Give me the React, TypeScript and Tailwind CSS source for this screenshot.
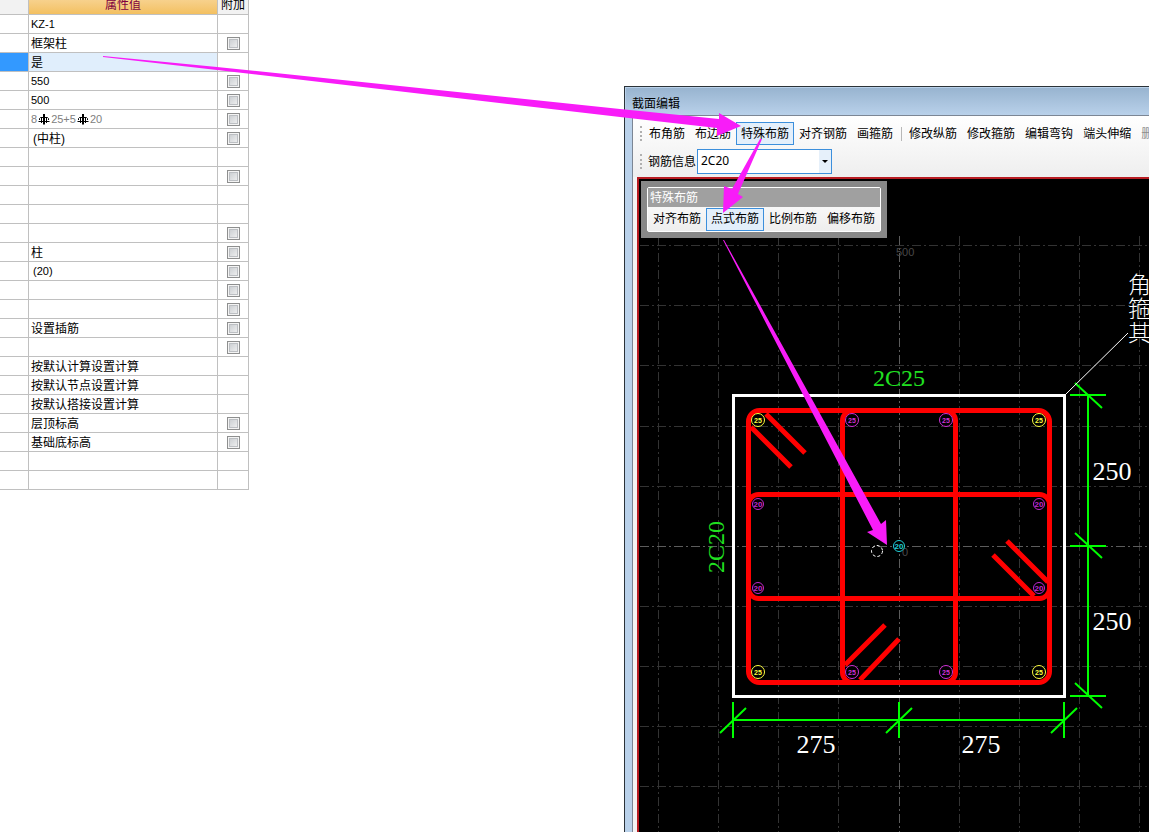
import React from 'react';

interface PropertyRow {
  value?: React.ReactNode;
  extra?: boolean;
  selected?: boolean;
  latin?: boolean;
}

const RebarSign = () => (
  <svg viewBox="0 0 12 12" className="mx-px size-3 shrink-0" fill="none" stroke="black">
    <path d="M6 1v10.5" strokeWidth="2" />
    <path d="M1.5 7V5.5l1-1h7l1 1V7M0.5 8.5h11M3.5 4v6M8.5 4v6" />
  </svg>
);

const rows: PropertyRow[] = [
  { value: 'KZ-1', latin: true },
  { value: '框架柱', extra: true },
  { value: '是', selected: true },
  { value: '550', extra: true, latin: true },
  { value: '500', extra: true, latin: true },
  {
    value: (
      <span className="flex items-center text-[#808080]">
        8<RebarSign />25+5<RebarSign />20
      </span>
    ),
    extra: true,
    latin: true,
  },
  { value: <span className="pl-0.5">(中柱)</span>, extra: true },
  {},
  { extra: true },
  {},
  {},
  { extra: true },
  { value: '柱', extra: true },
  { value: <span className="pl-0.5">(20)</span>, extra: true, latin: true },
  { extra: true },
  { extra: true },
  { value: '设置插筋', extra: true },
  { extra: true },
  { value: '按默认计算设置计算' },
  { value: '按默认节点设置计算' },
  { value: '按默认搭接设置计算' },
  { value: '层顶标高', extra: true },
  { value: '基础底标高', extra: true },
  {},
  {},
];

const PropertyTable = () => (
  <table className="-mt-1 w-[249px] shrink-0 table-fixed border-separate border-spacing-0 self-start text-xs leading-4 text-black">
    <colgroup>
      <col className="w-[29px]" />
      <col className="w-[189px]" />
      <col className="w-[31px]" />
    </colgroup>
    <thead>
      <tr className="h-[19px]">
        <th className="border-r border-b border-[#c0c0c0] bg-[#f2f2f2] p-0" />
        <th className="border-r border-b border-[#c0c0c0] bg-linear-to-b from-[#f8d698] to-[#f3c060] p-0 font-normal text-[#800040]">
          属性值
        </th>
        <th className="border-r border-b border-[#c0c0c0] bg-[#f2f2f2] p-0 font-normal whitespace-nowrap">附加</th>
      </tr>
    </thead>
    <tbody>
      {rows.map((row, i) => (
        <tr key={i} className="h-[19px]">
          <td className={`border-r border-b border-[#c0c0c0] p-0 ${row.selected ? 'bg-[#3399ff]' : ''}`} />
          <td
            className={`border-r border-b border-[#c0c0c0] pr-0 pb-0 pl-0.5 whitespace-nowrap ${
              row.selected ? 'bg-[#e0eefc]' : ''
            } ${row.latin ? 'pt-0 text-[11px]' : 'pt-0.5'}`}
          >
            {row.value}
          </td>
          <td className="border-r border-b border-[#c0c0c0] p-0">
            {row.extra && (
              <input
                type="checkbox"
                aria-label={`附加 ${i + 1}`}
                className="mx-auto block size-[13px] appearance-none border border-[#8e8f8f] bg-linear-to-br from-[#c4c8cc] to-[#f6f6f6] shadow-[inset_0_0_0_1px_#f4f4f4,inset_0_0_0_2px_#bcbfc3]"
              />
            )}
          </td>
        </tr>
      ))}
    </tbody>
  </table>
);

const ToolButton = ({ label, active, muted }: { label: string; active?: boolean; muted?: boolean }) => (
  <button
    type="button"
    className={`h-[23px] shrink-0 border px-1 whitespace-nowrap ${
      active ? 'border-[#3c8fdc] bg-[#e3effb]' : 'border-transparent'
    } ${muted ? 'text-[#8d8d8d]' : 'text-black'}`}
  >
    {label}
  </button>
);

const Grip = () => <span className="mr-0.5 h-[15px] w-0.5 shrink-0 border-l-2 border-dotted border-[#b0b0b0]" />;

const Toolbars = () => (
  <div className="bg-linear-to-b from-white to-[#eeeeee] pl-[7px]">
    <div className="flex h-[31px] items-center overflow-hidden pt-1">
      <Grip />
      <ToolButton label="布角筋" />
      <ToolButton label="布边筋" />
      <ToolButton label="特殊布筋" active />
      <ToolButton label="对齐钢筋" />
      <ToolButton label="画箍筋" />
      <span className="mr-0.5 ml-[3px] h-3.5 w-px shrink-0 bg-[#b8b8b8]" />
      <ToolButton label="修改纵筋" />
      <ToolButton label="修改箍筋" />
      <ToolButton label="编辑弯钩" />
      <ToolButton label="端头伸缩" />
      <ToolButton label="删" muted />
    </div>
    <div className="flex h-[30px] items-center pb-px">
      <Grip />
      <label htmlFor="rebar" className="ml-1 w-[49px] whitespace-nowrap">
        钢筋信息
      </label>
      <div className="relative">
        <select
          id="rebar"
          defaultValue="2C20"
          className="block h-[25px] w-[135px] appearance-none border border-[#3c8fdc] bg-white px-[3px] pb-0.5 font-['Noto_Sans'] text-xs text-black"
        >
          <option>2C20</option>
          <option>2C25</option>
        </select>
        <span className="pointer-events-none absolute inset-y-px right-px flex w-3 items-center justify-center bg-[#e6f0fa]">
          <svg viewBox="0 0 6 3" className="h-[3px] w-1.5">
            <path d="M0 0h6L3 3z" />
          </svg>
        </span>
      </div>
    </div>
  </div>
);

const SpecialPanel = () => (
  <div className="absolute top-0.5 left-0.5 bg-[#888888] p-1.5">
    <div className="rounded-xs border border-white bg-linear-to-b from-white to-[#eeeeee]">
      <h2 className="h-[19px] bg-[#a0a0a0] pl-0.5 leading-[21px] text-white">特殊布筋</h2>
      <div className="flex h-6 items-center">
        <ToolButton label="对齐布筋" />
        <ToolButton label="点式布筋" active />
        <ToolButton label="比例布筋" />
        <ToolButton label="偏移布筋" />
      </div>
    </div>
  </div>
);

const gridX = [658, 718, 778, 838, 959, 1019, 1079, 1139, 1199, 1259, 1319, 1379];
const gridY = [245, 305, 365, 426, 486, 606, 666, 726, 786, 846, 906, 966];

const bars = [
  { x: 758, y: 420, d: 25, color: '#ffff40' },
  { x: 1039, y: 420, d: 25, color: '#ffff40' },
  { x: 758, y: 672, d: 25, color: '#ffff40' },
  { x: 1039, y: 672, d: 25, color: '#ffff40' },
  { x: 852, y: 420, d: 25, color: '#d030d8' },
  { x: 946, y: 420, d: 25, color: '#d030d8' },
  { x: 852, y: 672, d: 25, color: '#d030d8' },
  { x: 946, y: 672, d: 25, color: '#d030d8' },
  { x: 758, y: 504, d: 20, color: '#c028d0' },
  { x: 1039, y: 504, d: 20, color: '#c028d0' },
  { x: 758, y: 588, d: 20, color: '#c028d0' },
  { x: 1039, y: 588, d: 20, color: '#c028d0' },
  { x: 899, y: 546, d: 20, color: '#20d0d8' },
];

const SectionDrawing = () => (
  <svg className="block size-full" fill="none">
    <g transform="translate(-639 -179)">
      <g stroke="#333333" strokeDasharray="9 3 2 3">
        {gridX.map((x) => (
          <path key={x} d={`M${x + 0.5} 236V2000`} />
        ))}
        {gridY.map((y) => (
          <path key={y} d={`M640 ${y + 0.5}H3000`} />
        ))}
        <path stroke="#5c5c5c" d="M899.5 236V2000M640 546.5H3000" />
      </g>
      <g fill="#484848" fontSize="11" fontFamily="Liberation Sans, sans-serif">
        <text x="896" y="256">500</text>
        <text x="902" y="556">0</text>
      </g>

      <rect x="733.5" y="395.5" width="331" height="301" stroke="white" strokeWidth="3" />

      <g stroke="#ff0000" strokeWidth="5">
        <rect x="748.5" y="410.5" width="301" height="272" rx="11" />
        <rect x="842.5" y="410.5" width="113" height="272" rx="10" />
        <rect x="748.5" y="494.5" width="301" height="104" rx="10" />
        <path d="M751 427l40 40M766 414l39 39M845 665l40-40M860 680l39-41M1007 541l41 41M993 555l41 41" />
      </g>

      {bars.map((bar) => (
        <g key={`${bar.x}-${bar.y}`}>
          <circle cx={bar.x} cy={bar.y} r={bar.d === 25 ? 6.5 : 5.5} fill="black" stroke={bar.color} />
          <text
            x={bar.x}
            y={bar.y + 3}
            fill={bar.color}
            fontSize={bar.d === 25 ? 7 : 8}
            fontWeight="bold"
            fontFamily="Liberation Sans, sans-serif"
            textAnchor="middle"
          >
            {bar.d}
          </text>
        </g>
      ))}
      <circle cx="877" cy="551" r="5.5" stroke="white" strokeDasharray="3 2" />

      <g stroke="#00ff00" strokeWidth="2">
        <path d="M733 720H1065M733 702v36M899 702v36M1064 702v36" />
        <path d="M720 733l26-25M886 733l26-25M1051 733l26-25" />
        <path d="M1088 395V696M1070 395h36M1070 546h36M1070 696h36" />
        <path d="M1075 383l27 25M1075 533l27 25M1075 683l27 25" />
      </g>
      <path stroke="white" d="M1066 394l62-61" />

      <g fontFamily="Liberation Serif, serif">
        <g fill="#20e020" fontSize="24" textAnchor="middle">
          <text x="899" y="386">2C25</text>
          <text x="724" y="547" transform="rotate(-90 724 547)">2C20</text>
        </g>
        <g fill="white" fontSize="26" textAnchor="middle">
          <text x="816" y="753">275</text>
          <text x="981" y="753">275</text>
          <text x="1112" y="480">250</text>
          <text x="1112" y="630">250</text>
        </g>
      </g>
      <g fill="white" fontSize="23" fontWeight="300" fontFamily="Noto Sans CJK SC, sans-serif">
        <text x="1128" y="293">角</text>
        <text x="1128" y="317">箍</text>
        <text x="1128" y="341">其</text>
      </g>
    </g>
  </svg>
);

const SectionEditor = () => (
  <section className="mt-[86px] ml-[375px] flex min-w-0 flex-1 flex-col border-t border-l border-[#2b3238] bg-[#b9d1ea] pt-px pl-px">
    <h1 className="h-[27px] bg-linear-to-b from-[#98b4d0] to-[#b9d1ea] pl-1.5 leading-8">截面编辑</h1>
    <div className="ml-1.5 flex flex-1 flex-col border-t border-l border-[#7c8694] bg-[#f4f4f4]">
      <Toolbars />
      <div className="relative ml-1 flex-1 overflow-hidden border-t-2 border-l-2 border-[#b81c22] bg-black">
        <div className="absolute inset-0">
          <SectionDrawing />
        </div>
        <SpecialPanel />
      </div>
    </div>
  </section>
);

const GuideArrows = () => (
  <svg className="pointer-events-none absolute inset-0 size-full" fill="#f81cf8">
    <path d="M103 56L217 67L620 109L719 119V113L741 126L717 136V128L620 117L217 70L103 57Z" />
    <path d="M760 139L732 189L724 186L723 213L743 197L738 194L762 139Z" />
    <path d="M724 240L881 524L886 520L887 545L867 532L873 530L723 240Z" />
  </svg>
);

const App: React.FC = () => (
  <main className="relative flex min-h-screen overflow-hidden bg-white font-['Liberation_Sans','Noto_Sans_CJK_SC',sans-serif] text-xs text-black">
    <PropertyTable />
    <SectionEditor />
    <GuideArrows />
  </main>
);

export default App;
